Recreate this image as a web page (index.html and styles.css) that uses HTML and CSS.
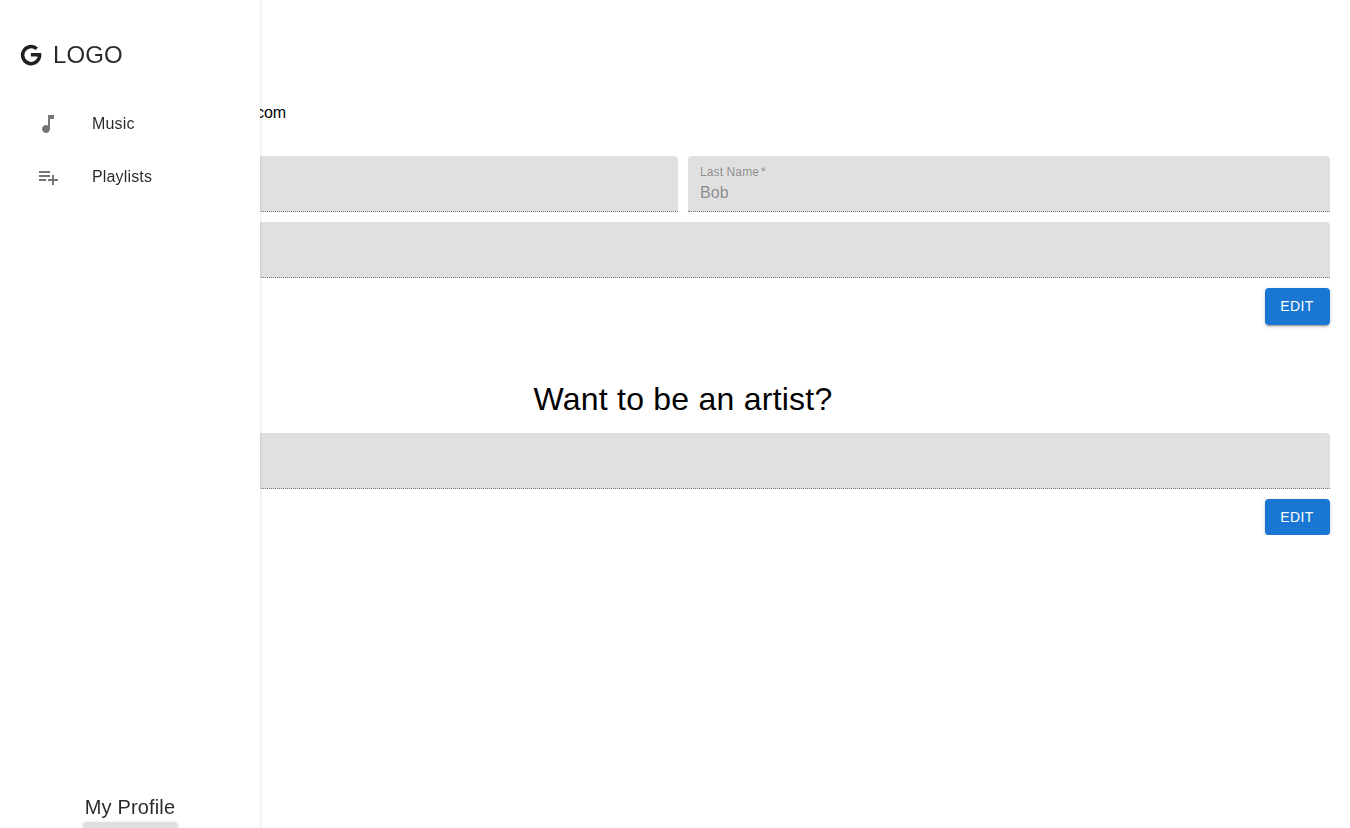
FILE: index.html
```html
<!DOCTYPE html>
<html lang="en">
<head>
<meta charset="utf-8">
<title>My Profile</title>
<link rel="stylesheet" href="styles.css">
</head>
<body>
<aside class="drawer">
  <div class="brand">
    <svg class="icon brand-icon" viewBox="0 0 24 24"><path d="M17.8 5.8A8.5 8.5 0 1 0 20.6 11.7H11.9"/></svg>
    <span>LOGO</span>
  </div>
  <nav class="nav">
    <a class="nav-item"><svg class="icon" viewBox="0 0 24 24"><path d="M12 3v10.55c-.59-.34-1.27-.55-2-.55-2.21 0-4 1.79-4 4s1.79 4 4 4 4-1.79 4-4V7h4V3h-6z"/></svg><span>Music</span></a>
    <a class="nav-item"><svg class="icon" viewBox="0 0 24 24"><path d="M14 10H3v2h11v-2zm0-4H3v2h11V6zm4 8v-4h-2v4h-4v2h4v4h2v-4h4v-2h-4zM3 16h7v-2H3v2z"/></svg><span>Playlists</span></a>
  </nav>
  <div class="profile">
    <span class="profile-title">My Profile</span>
    <button class="profile-button"></button>
  </div>
</aside>
<main class="content">
  <p class="email">.com</p>
  <form class="form">
    <div class="row">
      <div class="field"></div>
      <div class="field"><label class="label">Last Name<span class="star">*</span></label><span class="value">Bob</span></div>
    </div>
    <div class="field"></div>
    <button class="button">Edit</button>
  </form>
  <h1 class="title">Want to be an artist?</h1>
  <form class="form">
    <div class="field"></div>
    <button class="button button-short">Edit</button>
  </form>
</main>
</body>
</html>
```

FILE: styles.css
```css
* { box-sizing: border-box; }
body {
  margin: 0;
  background: #fff;
  color: #000;
  font-family: "Liberation Sans", Arial, sans-serif;
  font-size: 16px;
  line-height: 24px;
  overflow: hidden;
}
.drawer {
  position: fixed;
  top: 0;
  left: 0;
  width: 260px;
  height: 828px;
  display: flex;
  flex-direction: column;
  background: #fff;
  color: rgba(0, 0, 0, 0.84);
  box-shadow: 0 0 3px rgba(0, 0, 0, 0.16);
}
.icon { width: 24px; height: 24px; fill: currentColor; flex: none; }
.brand {
  display: flex;
  align-items: center;
  gap: 10px;
  padding: 39px 0 0 19px;
  font-size: 24px;
  line-height: 32px;
  letter-spacing: 0.005em;
}
.brand-icon { fill: none; stroke: #212121; stroke-width: 3.5; }
.nav { padding-top: 26px; }
.nav-item {
  display: flex;
  align-items: center;
  gap: 32px;
  height: 53px;
  padding-left: 36px;
  letter-spacing: 0.00938em;
}
.nav-item .icon { color: #757575; }
.profile {
  margin-top: auto;
  display: flex;
  flex-direction: column;
  align-items: center;
}
.profile-title {
  font-size: 20px;
  line-height: 30px;
  letter-spacing: 0.0075em;
}
.profile-button {
  width: 95px;
  height: 6px;
  border: 0;
  border-radius: 4px 4px 0 0;
  background: #e0e0e0;
  box-shadow: 0 1px 5px rgba(0, 0, 0, 0.12);
}
.content { padding: 101px 20px 0 36px; }
.email { margin: 0 0 31px; padding-left: 215.5px; }
.form { display: flex; flex-direction: column; gap: 10px; }
.row { display: grid; grid-template-columns: 1fr 1fr; gap: 10px; }
.field {
  height: 56px;
  padding: 8px 12px;
  display: flex;
  flex-direction: column;
  background: #e0e0e0;
  border-bottom: 1px dotted rgba(0, 0, 0, 0.45);
  border-radius: 4px 4px 0 0;
  color: rgba(0, 0, 0, 0.4);
}
.label { font-size: 12px; line-height: 16px; letter-spacing: 0.00938em; }
.star { padding-left: 2px; }
.value { line-height: 26px; letter-spacing: 0.00938em; }
.button {
  align-self: flex-end;
  width: 65px;
  height: 36.5px;
  padding: 0 1px 0 0;
  border: 0;
  border-radius: 4px;
  background: #1976d2;
  color: #fff;
  font: 500 14px/24.5px "Liberation Sans", Arial, sans-serif;
  letter-spacing: 0.02857em;
  text-transform: uppercase;
  box-shadow: 0 3px 1px -2px rgba(0, 0, 0, 0.2), 0 2px 2px rgba(0, 0, 0, 0.14), 0 1px 5px rgba(0, 0, 0, 0.12);
}
.button-short { height: 36px; }
.title {
  margin: 53px 0 13.5px;
  font-weight: 400;
  font-size: 32px;
  line-height: 42px;
  letter-spacing: 0.00735em;
  text-align: center;
}
```
